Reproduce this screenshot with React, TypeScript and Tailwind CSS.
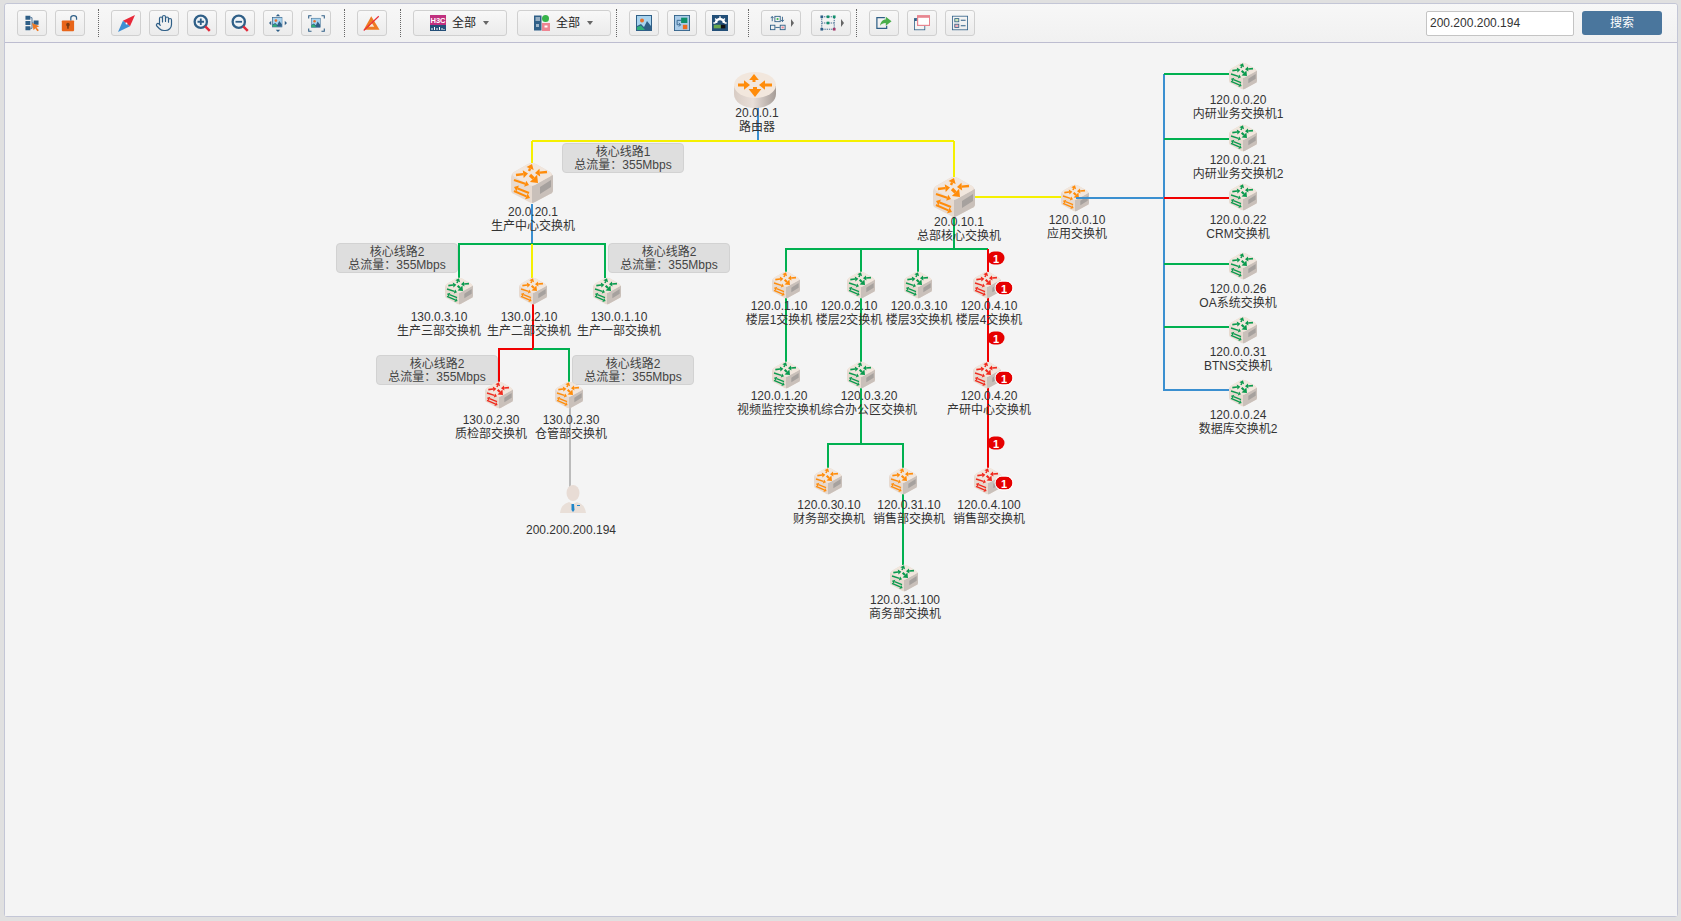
import type { ReactNode } from "react"
import { Hand } from "lucide-react"

const NAVY = "#2f5f87"
const COLORS = { green: "#0a9a4e", orange: "#ff8c0a", red: "#f02a1e" }
type Tone = keyof typeof COLORS

// canvas starts at this page position, all diagram data is in page coordinates
const OX = 5
const OY = 43

const LINES: { d: string; c: string }[] = [
  { d: "M758 105V141", c: "#3a8fd0" },
  { d: "M532 141H954M532 141V165M954 141V180", c: "#f5f000" },
  { d: "M532 204V244", c: "#3a8fd0" },
  { d: "M459 280V244H605V280", c: "#00b050" },
  { d: "M532 244V280", c: "#f5f000" },
  { d: "M533 300V349", c: "#f00000" },
  { d: "M533 349H499V385", c: "#f00000" },
  { d: "M533 349H569V385", c: "#00b050" },
  { d: "M570 405V490", c: "#bbbbbb" },
  { d: "M954 197H1075", c: "#f5f000" },
  { d: "M1075 198H1164", c: "#3a8fd0" },
  { d: "M954 215V249M786 375V249H988M861 444V249M918 249V278", c: "#00b050" },
  { d: "M828 470V444H903V578", c: "#00b050" },
  { d: "M988 249V485", c: "#f00000" },
  { d: "M1164 74V390H1243", c: "#3a8fd0" },
  { d: "M1164 74H1243M1164 139H1243M1164 264H1243M1164 327H1243", c: "#00b050" },
  { d: "M1164 198H1243", c: "#f00000" },
]

const BOXES: { x: number; y: number; title: string }[] = [
  { x: 562, y: 143, title: "核心线路1" },
  { x: 336, y: 243, title: "核心线路2" },
  { x: 608, y: 243, title: "核心线路2" },
  { x: 376, y: 355, title: "核心线路2" },
  { x: 572, y: 355, title: "核心线路2" },
]

type Node = { x: number; y: number; s: number; t: Tone; ip: string; name: string; lx: number; ly: number }

const NODES: Node[] = [
  { x: 532, y: 183, s: 42, t: "orange", ip: "20.0.20.1", name: "生产中心交换机", lx: 533, ly: 212 },
  { x: 954, y: 197, s: 42, t: "orange", ip: "20.0.10.1", name: "总部核心交换机", lx: 959, ly: 222 },
  { x: 1075, y: 198, s: 28, t: "orange", ip: "120.0.0.10", name: "应用交换机", lx: 1077, ly: 220 },
  { x: 459, y: 291, s: 28, t: "green", ip: "130.0.3.10", name: "生产三部交换机", lx: 439, ly: 317 },
  { x: 533, y: 291, s: 28, t: "orange", ip: "130.0.2.10", name: "生产二部交换机", lx: 529, ly: 317 },
  { x: 607, y: 291, s: 28, t: "green", ip: "130.0.1.10", name: "生产一部交换机", lx: 619, ly: 317 },
  { x: 499, y: 395, s: 28, t: "red", ip: "130.0.2.30", name: "质检部交换机", lx: 491, ly: 420 },
  { x: 569, y: 395, s: 28, t: "orange", ip: "130.0.2.30", name: "仓管部交换机", lx: 571, ly: 420 },
  { x: 786, y: 285, s: 28, t: "orange", ip: "120.0.1.10", name: "楼层1交换机", lx: 779, ly: 306 },
  { x: 861, y: 285, s: 28, t: "green", ip: "120.0.2.10", name: "楼层2交换机", lx: 849, ly: 306 },
  { x: 918, y: 285, s: 28, t: "green", ip: "120.0.3.10", name: "楼层3交换机", lx: 919, ly: 306 },
  { x: 987, y: 285, s: 28, t: "red", ip: "120.0.4.10", name: "楼层4交换机", lx: 989, ly: 306 },
  { x: 786, y: 375, s: 28, t: "green", ip: "120.0.1.20", name: "视频监控交换机", lx: 779, ly: 396 },
  { x: 861, y: 375, s: 28, t: "green", ip: "120.0.3.20", name: "综合办公区交换机", lx: 869, ly: 396 },
  { x: 987, y: 375, s: 28, t: "red", ip: "120.0.4.20", name: "产研中心交换机", lx: 989, ly: 396 },
  { x: 828, y: 481, s: 28, t: "orange", ip: "120.0.30.10", name: "财务部交换机", lx: 829, ly: 505 },
  { x: 903, y: 481, s: 28, t: "orange", ip: "120.0.31.10", name: "销售部交换机", lx: 909, ly: 505 },
  { x: 988, y: 481, s: 28, t: "red", ip: "120.0.4.100", name: "销售部交换机", lx: 989, ly: 505 },
  { x: 904, y: 578, s: 28, t: "green", ip: "120.0.31.100", name: "商务部交换机", lx: 905, ly: 600 },
  { x: 1243, y: 76, s: 28, t: "green", ip: "120.0.0.20", name: "内研业务交换机1", lx: 1238, ly: 100 },
  { x: 1243, y: 138, s: 28, t: "green", ip: "120.0.0.21", name: "内研业务交换机2", lx: 1238, ly: 160 },
  { x: 1243, y: 197, s: 28, t: "green", ip: "120.0.0.22", name: "CRM交换机", lx: 1238, ly: 220 },
  { x: 1243, y: 266, s: 28, t: "green", ip: "120.0.0.26", name: "OA系统交换机", lx: 1238, ly: 289 },
  { x: 1243, y: 330, s: 28, t: "green", ip: "120.0.0.31", name: "BTNS交换机", lx: 1238, ly: 352 },
  { x: 1243, y: 393, s: 28, t: "green", ip: "120.0.0.24", name: "数据库交换机2", lx: 1238, ly: 415 },
]

const BADGES: { x: number; y: number; ring?: boolean }[] = [
  { x: 996, y: 258 },
  { x: 1004, y: 288, ring: true },
  { x: 996, y: 338 },
  { x: 1004, y: 378, ring: true },
  { x: 996, y: 443 },
  { x: 1004, y: 483, ring: true },
]

function Arrow({ x1, y1, x2, y2, c, w = 2 }: { x1: number; y1: number; x2: number; y2: number; c: string; w?: number }) {
  const a = Math.atan2(y2 - y1, x2 - x1)
  const h = w * 2
  const bx = x2 - Math.cos(a) * h
  const by = y2 - Math.sin(a) * h
  const nx = -Math.sin(a) * h * 0.8
  const ny = Math.cos(a) * h * 0.8
  return (
    <g>
      <line x1={x1} y1={y1} x2={bx} y2={by} stroke={c} strokeWidth={w} />
      <polygon points={`${x2},${y2} ${bx + nx},${by + ny} ${bx - nx},${by - ny}`} fill={c} />
    </g>
  )
}

function SwitchIcon({ size, tone }: { size: number; tone: Tone }) {
  const c = COLORS[tone]
  return (
    <svg width={size} height={size} viewBox="0 0 42 42">
      <path d="M17 2Q21 0 25 2L39 10Q42 12 42 15L42 28Q42 31 39 32L24 40Q21 42 18 40L3 32Q0 31 0 28L0 15Q0 12 3 10Z" fill="#e7dad0" />
      <path d="M21 24L42 13L42 28Q42 31 39 32L24 40Q22 41 21 41Z" fill="#c9c0ba" />
      <path d="M17 2Q21 0 25 2L39 10Q42 12 39 14.500L24 23Q21 24.500 18 23L3 14.500Q0 12 3 10Z" fill="#f1e6dd" />
      <path d="M29 25L40 18V25L29 32Z" fill="#a6a19e" />
      <Arrow x1={18} y1={9} x2={21} y2={2} c={c} w={2.400} />
      <Arrow x1={5} y1={13} x2={17} y2={11.500} c={c} w={2.400} />
      <Arrow x1={36} y1={10} x2={24} y2={11} c={c} w={2.400} />
      <Arrow x1={19} y1={13} x2={27} y2={21} c={c} w={3.200} />
      <Arrow x1={3} y1={18} x2={18} y2={23} c={c} w={2} />
      <Arrow x1={18} y1={31} x2={3} y2={25} c={c} w={2} />
      <Arrow x1={3} y1={29} x2={19} y2={36} c={c} w={2} />
    </svg>
  )
}

function RouterIcon() {
  const c = "#ff8c0a"
  return (
    <svg width={42} height={36} viewBox="0 0 42 36">
      <defs>
        <linearGradient id="routerSide" x1="0" x2="1" y1="0" y2="0">
          <stop offset="0" stopColor="#d8ccc4" />
          <stop offset="0.45" stopColor="#e9dfd9" />
          <stop offset="1" stopColor="#a59c97" />
        </linearGradient>
      </defs>
      <path d="M0 14V22C0 30 9 36 21 36S42 30 42 22V14Z" fill="url(#routerSide)" />
      <ellipse cx="21" cy="13" rx="21" ry="13" fill="#f2e7dd" />
      <Arrow x1={20} y1={10} x2={20} y2={2} c={c} w={3} />
      <Arrow x1={4} y1={13} x2={16} y2={13} c={c} w={3} />
      <Arrow x1={38} y1={13} x2={25} y2={13} c={c} w={3} />
      <Arrow x1={21} y1={15} x2={21} y2={25} c={c} w={4} />
    </svg>
  )
}

function UserIcon() {
  return (
    <svg width={28} height={28} viewBox="0 0 28 28">
      <path d="M1 28C2 21 5 19 10 17L14 19L18 17C23 19 26 21 27 28Z" fill="#e9dfd8" />
      <ellipse cx="14" cy="8" rx="6.500" ry="8" fill="#e8dcd5" />
      <path d="M12.500 19H15L15.500 25L14 27L12.500 25Z" fill="#1f86c9" />
      <rect x="18" y="20" width="3" height="1" fill="#1f86c9" />
    </svg>
  )
}

// small landscape picture used by several toolbar buttons
function Picture({ x = 4, y = 4, s = 14, bg = "#a9d3ee" }: { x?: number; y?: number; s?: number; bg?: string }) {
  return (
    <svg x={x} y={y} width={s} height={s} viewBox="0 0 16 16">
      <rect x="0.500" y="0.500" width="15" height="15" fill={bg} stroke={NAVY} />
      <circle cx="6" cy="5.500" r="2" fill="#e8702a" />
      <path d="M1 15V11L5 9L8 12L11 6L15 11V15Z" fill={NAVY} />
      <path d="M1 15V12L5 10.500L9 15Z" fill="#2fae7a" />
    </svg>
  )
}

const ICONS: Record<string, ReactNode> = {
  topo: (
    <svg width={18} height={18} viewBox="0 0 22 22">
      <path d="M3 2H9V7H3ZM3 8.500H9V13.500H3ZM3 15H9V20H3ZM13 8H19V13H13Z" fill={NAVY} />
      <path d="M9 4.500H11V17.500H9M11 11H13" fill="none" stroke={NAVY} />
      <path d="M11 11L20 15L16.500 16.500L19.500 20L17.500 21L15 17.500L13 20Z" fill="#ef7a24" />
    </svg>
  ),
  lock: (
    <svg width={18} height={18} viewBox="0 0 22 22">
      <rect x="1" y="8" width="15" height="13" rx="1" fill="#e8651a" />
      <circle cx="8.500" cy="13" r="2.200" fill="#7d3a10" />
      <rect x="7.500" y="14" width="2" height="4" fill="#7d3a10" />
      <path d="M12 8V4.500C12 1 19 1 19 4.500V7" fill="none" stroke={NAVY} strokeWidth="1.500" />
    </svg>
  ),
  compass: (
    <svg width={17} height={17} viewBox="0 0 24 24">
      <path d="M24 0L17 16L7 8Z" fill="#e8293a" />
      <path d="M0 24L7 8L17 16Z" fill="#3d8fd4" />
      <circle cx="12" cy="12" r="1.300" fill="#fff" />
    </svg>
  ),
  hand: <Hand size={18} color={NAVY} strokeWidth={1.6} />,
  zoomIn: (
    <svg width={18} height={18} viewBox="0 0 22 22">
      <circle cx="9.500" cy="9.500" r="7.500" fill="#eef3f7" stroke={NAVY} strokeWidth="2.800" />
      <path d="M5.500 9.500H13.500M9.500 5.500V13.500" stroke={NAVY} strokeWidth="2.200" />
      <path d="M15 15L20.500 20.500" stroke="#e02a3a" strokeWidth="3" />
    </svg>
  ),
  zoomOut: (
    <svg width={18} height={18} viewBox="0 0 22 22">
      <circle cx="9.500" cy="9.500" r="7.500" fill="#eef3f7" stroke={NAVY} strokeWidth="2.800" />
      <path d="M5.500 9.500H13.500" stroke={NAVY} strokeWidth="2.200" />
      <path d="M15 15L20.500 20.500" stroke="#e02a3a" strokeWidth="3" />
    </svg>
  ),
  fit: (
    <svg width={18} height={18} viewBox="0 0 24 24">
      <Picture />
      <path d="M12 0L15 3H9ZM12 24L9 21H15ZM0 12L3 9V15ZM24 12L21 15V9Z" fill={NAVY} />
    </svg>
  ),
  full: (
    <svg width={17} height={17} viewBox="0 0 24 24">
      <Picture />
      <path d="M1 5V1H5M19 1H23V5M23 19V23H19M5 23H1V19" fill="none" stroke={NAVY} strokeWidth="1.500" />
    </svg>
  ),
  noLink: (
    <svg width={18} height={18} viewBox="0 0 24 24">
      <path d="M11 3L22 21H1Z" fill="#ee7a22" />
      <path d="M11 11L15 17H8Z" fill="#fbe7d6" />
      <path d="M1 22L21 3" stroke="#e8293a" strokeWidth="1.400" />
    </svg>
  ),
  h3c: (
    <svg width={16} height={16} viewBox="0 0 16 16">
      <rect width="16" height="10" fill="#c0307f" />
      <rect y="10" width="16" height="6" fill="#234f78" />
      <text x="8" y="8" textAnchor="middle" fontSize="7.500" fontWeight="700" fill="#fff" fontFamily="Liberation Sans">H3C</text>
      <path d="M2 15V13M4.500 15V12M7 15V13M9.500 15V12M12 15V13M14 15V14" stroke="#fff" />
    </svg>
  ),
  server: (
    <svg width={16} height={16} viewBox="0 0 16 16">
      <rect x="0" y="0.500" width="7.500" height="15" fill="#2f5f87" />
      <path d="M1.500 3H6M1.500 5H6" stroke="#fff" />
      <rect x="2" y="9" width="3" height="3" fill="#9fb6c9" />
      <circle cx="11.500" cy="3.500" r="3.500" fill="#37b34a" />
      <rect x="8" y="8" width="8" height="8" fill="#ee8592" />
      <rect x="10.500" y="10.500" width="3" height="2" fill="#fff" />
    </svg>
  ),
  pic: (
    <svg width={16} height={16} viewBox="0 0 16 16">
      <Picture x={0} y={0} s={16} />
    </svg>
  ),
  move: (
    <svg width={16} height={16} viewBox="0 0 18 18">
      <rect x="0.500" y="0.500" width="17" height="17" fill="#a9cbe8" stroke={NAVY} />
      <rect x="8" y="3" width="7" height="6" fill="#0f8f6a" />
      <rect x="10" y="11" width="5" height="5" fill="#ee6c1e" />
      <path d="M8 6H3.500V11M7 11H3.500M5.500 9L7.500 11L5.500 13" fill="none" stroke={NAVY} />
    </svg>
  ),
  gear: (
    <svg width={16} height={16} viewBox="0 0 18 18">
      <rect width="18" height="18" fill="#234f78" />
      <path d="M3 9A6 6 0 0 1 15 9H12A3 3 0 0 0 6 9Z" fill="#fff" />
      <path d="M9 1.500V4M3.500 4L5.500 6M14.500 4L12.500 6M1.500 9H4M14 9H16.500" stroke="#fff" strokeWidth="1.500" />
      <rect x="2" y="11" width="8" height="4" fill="#6aa84f" />
      <rect x="10" y="11" width="5" height="4" fill="#111" />
    </svg>
  ),
  arrange: (
    <svg width={16} height={16} viewBox="0 0 18 18">
      <rect x="5.500" y="1.500" width="6" height="6" fill="none" stroke={NAVY} />
      <rect x="7.500" y="3.500" width="2" height="2" fill="#37b34a" />
      <rect x="0.500" y="11.500" width="5" height="5" fill="none" stroke={NAVY} />
      <rect x="11.500" y="11.500" width="5.500" height="5" fill="none" stroke={NAVY} />
      <rect x="13" y="13" width="2.500" height="2" fill="#ee8592" />
      <path d="M2.500 7V2M1 3.500L2.500 1.500L4 3.500M14 2V7M12.500 5.500L14 7.500L15.500 5.500M6 14H11" stroke={NAVY} fill="none" />
    </svg>
  ),
  select: (
    <svg width={16} height={16} viewBox="0 0 18 18">
      <rect x="2" y="2" width="14" height="14" fill="none" stroke={NAVY} strokeDasharray="1.500 1" />
      <path d="M2 9H16" stroke={NAVY} strokeDasharray="1.500 1" />
      <rect x="0.500" y="0.500" width="3" height="3" fill={NAVY} />
      <rect x="7.500" y="0.500" width="3" height="3" fill="#0f8f6a" />
      <rect x="14.500" y="0.500" width="3" height="3" fill="#0f8f6a" />
      <rect x="7.500" y="7.500" width="3" height="3" fill="#0f8f6a" />
      <rect x="0.500" y="14.500" width="3" height="3" fill={NAVY} />
      <rect x="14.500" y="14.500" width="3" height="3" fill="#a33b6b" />
    </svg>
  ),
  share: (
    <svg width={16} height={16} viewBox="0 0 18 18">
      <path d="M10 3H1V15H12V12" fill="none" stroke={NAVY} strokeWidth="1.400" />
      <path d="M11 2L17.500 7L11 12V9C8 9 6 10 4.500 12C5 8 7.500 5 11 5Z" fill="#49ae4b" />
    </svg>
  ),
  windows: (
    <svg width={16} height={16} viewBox="0 0 20 20">
      <rect x="0.500" y="4.500" width="13" height="14" fill="#f4f4f4" stroke={NAVY} />
      <rect x="0.500" y="4.500" width="3" height="3" fill={NAVY} />
      <rect x="4.500" y="1" width="15" height="12" fill="#fff" stroke="#e8858f" strokeWidth="1.500" />
      <rect x="4" y="0.500" width="16" height="3" fill="#e8858f" />
    </svg>
  ),
  list: (
    <svg width={16} height={16} viewBox="0 0 20 20">
      <rect x="0.500" y="1.500" width="19" height="17" fill="none" stroke={NAVY} />
      <rect x="3.500" y="4.500" width="5" height="4" fill="#cfe6b8" stroke={NAVY} />
      <rect x="3.500" y="11.500" width="5" height="4" fill="#f2b0b8" stroke={NAVY} />
      <path d="M11 6.500H17M11 13.500H17" stroke={NAVY} strokeWidth="1.300" />
    </svg>
  ),
}

const BTN =
  "flex h-[26px] items-center justify-center rounded-[3px] border border-[#d0d0d0] bg-linear-to-b from-[#f8f8f8] to-[#ebebeb]"

function Btn({ icon }: { icon: string }) {
  return <div className={`${BTN} w-[30px]`}>{ICONS[icon]}</div>
}

function MenuBtn({ icon }: { icon: string }) {
  return (
    <div className={`${BTN} w-[40px] gap-[5px] pl-[2px]`}>
      {ICONS[icon]}
      <span className="h-0 w-0 border-y-[4px] border-l-[3px] border-y-transparent border-l-[#666]" />
    </div>
  )
}

function Dropdown({ icon }: { icon: string }) {
  return (
    <div className="flex h-[26px] w-[94px] items-center gap-[6px] rounded-[3px] border border-[#d0d0d0] bg-linear-to-b from-[#f8f8f8] to-[#ebebeb] pl-[16px] text-[12px] text-[#222]">
      {ICONS[icon]}
      <span>全部</span>
      <span className="ml-[1px] h-0 w-0 border-x-[3px] border-t-[4px] border-x-transparent border-t-[#666]" />
    </div>
  )
}

function Sep({ narrow }: { narrow?: boolean }) {
  return (
    <div
      className={`${narrow ? "ml-[5px]" : "ml-[13px]"} mr-[12px] h-[28px] w-0 border-l border-dotted border-[#666]`}
    />
  )
}

function Toolbar() {
  return (
    <div className="flex h-[39px] shrink-0 items-center rounded-t-[3px] border-b border-[#bdbdd0] bg-linear-to-b from-[#f7f7f7] to-[#f1f1f1] pl-[12px]">
      <div className="flex gap-2">
        <Btn icon="topo" />
        <Btn icon="lock" />
      </div>
      <Sep />
      <div className="flex gap-2">
        <Btn icon="compass" />
        <Btn icon="hand" />
        <Btn icon="zoomIn" />
        <Btn icon="zoomOut" />
        <Btn icon="fit" />
        <Btn icon="full" />
      </div>
      <Sep />
      <Btn icon="noLink" />
      <Sep />
      <div className="flex gap-[10px]">
        <Dropdown icon="h3c" />
        <Dropdown icon="server" />
      </div>
      <Sep narrow />
      <div className="flex gap-2">
        <Btn icon="pic" />
        <Btn icon="move" />
        <Btn icon="gear" />
      </div>
      <Sep />
      <div className="flex gap-[10px]">
        <MenuBtn icon="arrange" />
        <MenuBtn icon="select" />
      </div>
      <Sep narrow />
      <div className="flex gap-2">
        <Btn icon="share" />
        <Btn icon="windows" />
        <Btn icon="list" />
      </div>
      <div className="ml-auto flex items-center gap-2 pr-[15px]">
        <input
          readOnly
          value="200.200.200.194"
          className="h-[25px] w-[148px] rounded-[2px] border border-[#c4c4c4] bg-white px-[3px] text-[12px] text-[#333] outline-none"
        />
        <button className="h-[24px] w-[80px] rounded-[3px] bg-[#4a769d] text-[12px] text-white">搜索</button>
      </div>
    </div>
  )
}

function Diagram() {
  return (
    <div className="relative flex-1 overflow-hidden bg-[#f4f4f4] text-[12px] leading-[14px] text-[#333]">
      <svg className="absolute left-0 top-0 h-[872px] w-[1672px]" viewBox={`${OX} ${OY} 1672 872`} shapeRendering="crispEdges">
        {LINES.map((l, i) => (
          <path key={i} d={l.d} fill="none" stroke={l.c} strokeWidth={2} />
        ))}
      </svg>

      {/* router sits on top of the yellow trunk */}
      <div className="absolute leading-[0]" style={{ left: 734 - OX, top: 72 - OY }}>
        <RouterIcon />
      </div>
      <div className="absolute -translate-x-1/2 whitespace-nowrap text-center" style={{ left: 757 - OX, top: 106 - OY }}>
        <div>20.0.0.1</div>
        <div>路由器</div>
      </div>

      {BOXES.map((b, i) => (
        <div
          key={i}
          className="absolute h-[30px] w-[122px] rounded-[4px] border border-[#d2d2d2] bg-[#dedede] pt-[2px] text-center leading-[13px] text-[#444]"
          style={{ left: b.x - OX, top: b.y - OY }}
        >
          <div>{b.title}</div>
          <div>总流量：355Mbps</div>
        </div>
      ))}

      {NODES.map((n) => (
        <div key={n.x + "-" + n.y}>
          <div className="absolute leading-[0]" style={{ left: n.x - n.s / 2 - OX, top: n.y - n.s / 2 - OY }}>
            <SwitchIcon size={n.s} tone={n.t} />
          </div>
          <div
            className="absolute -translate-x-1/2 whitespace-nowrap text-center"
            style={{ left: n.lx - OX, top: n.ly - 7 - OY }}
          >
            <div>{n.ip}</div>
            <div>{n.name}</div>
          </div>
        </div>
      ))}

      {/* this link is drawn over the switch it leaves */}
      <svg className="absolute left-0 top-0 h-[872px] w-[1672px]" viewBox={`${OX} ${OY} 1672 872`} shapeRendering="crispEdges">
        <path d="M1076 198H1095" fill="none" stroke="#3a8fd0" strokeWidth={2} />
      </svg>

      <div className="absolute leading-[0]" style={{ left: 559 - OX, top: 485 - OY }}>
        <UserIcon />
      </div>
      <div className="absolute -translate-x-1/2 whitespace-nowrap" style={{ left: 571 - OX, top: 523 - OY }}>
        200.200.200.194
      </div>

      {BADGES.map((b, i) => (
        <div
          key={i}
          className={`absolute flex h-[13px] w-[17px] -translate-x-1/2 -translate-y-1/2 items-center justify-center rounded-full bg-[#e60000] text-[11px] font-bold text-white ${
            b.ring ? "outline outline-1 outline-white" : ""
          }`}
          style={{ left: b.x - OX, top: b.y - OY }}
        >
          1
        </div>
      ))}
    </div>
  )
}

export default function App() {
  return (
    <div className="h-[921px] w-[1681px] overflow-hidden bg-[#e0e0e0] pb-[4px] pl-[4px] pr-[3px] pt-[3px] font-['Liberation_Sans','Noto_Sans_CJK_SC',sans-serif]">
      <div className="flex h-full flex-col rounded-[3px] border border-[#c3c6d6] bg-[#f4f4f4]">
        <Toolbar />
        <Diagram />
      </div>
    </div>
  )
}
